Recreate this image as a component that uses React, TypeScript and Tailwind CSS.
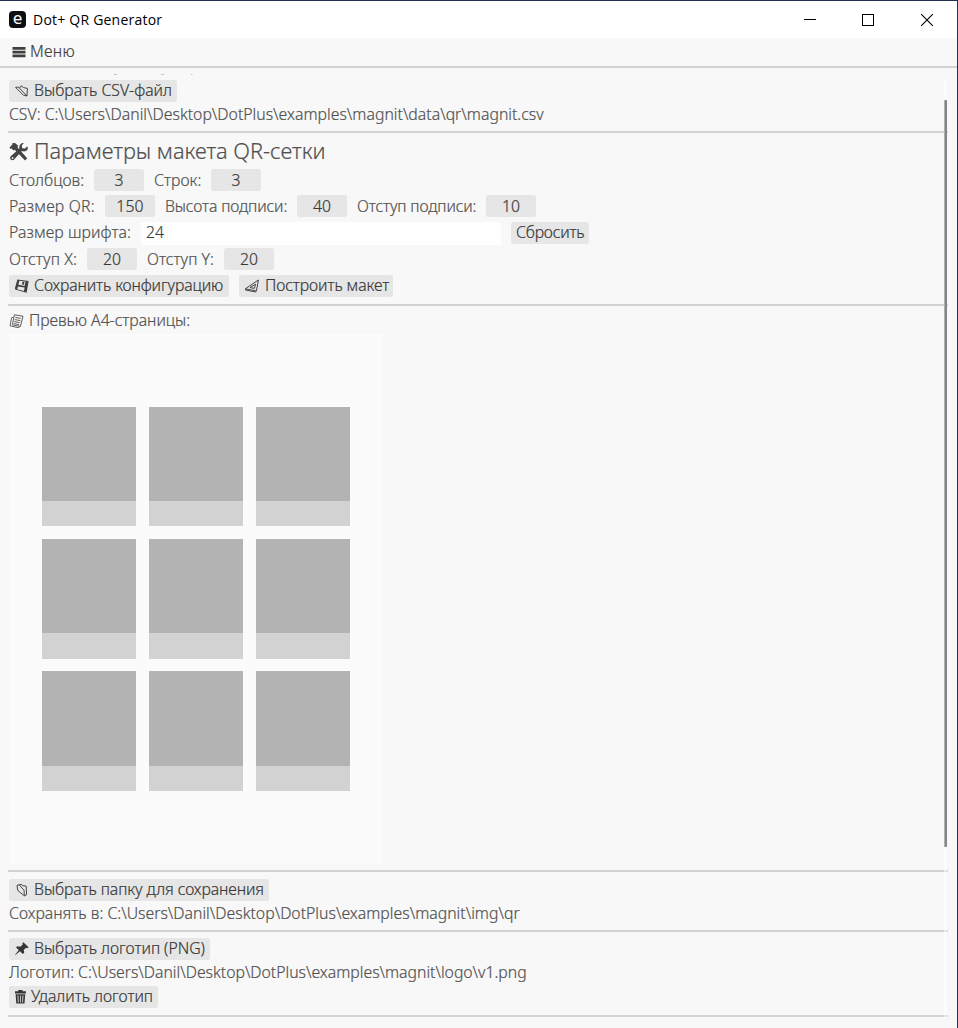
import type { ReactNode } from "react";

const UI = "font-['Noto_Sans','Open_Sans',sans-serif]";

function Separator() {
  return <div className="h-[2px] w-[940px] shrink-0 bg-[#d3d3d3]" />;
}

function Button({ icon, className, children }: { icon?: ReactNode; className: string; children: ReactNode }) {
  return (
    <button className={`flex h-[22px] shrink-0 items-center rounded-[2.5px] bg-[#e6e6e6] pl-[5px] leading-[22px] text-[#383838] ${className}`}>
      {icon}
      <span className="-mt-[2px]">{children}</span>
    </button>
  );
}

function Field({ label, value, className }: { label: string; value: string; className: string }) {
  return (
    <div className="flex h-[22px] items-center">
      <label className={`shrink-0 ${className}`}>{label}</label>
      <div className="mr-[10px] h-[22px] w-[50px] rounded-[2.5px] bg-[#e6e6e6] text-center leading-[22px] tracking-[0.1px] text-[#383838]">{value}</div>
    </div>
  );
}

function OpenFolderIcon() {
  return (
    <svg className="mr-[4px] h-[16px] w-[16px] shrink-0" viewBox="0 0 16 16" fill="none" stroke="#454545" strokeWidth="1">
      <path d="M1.6 4.4 4.4 4 13 13 9.4 12.2Z" />
      <path d="M5.6 5 7.2 2.8 9.6 4.6 13.4 5.4 13 13" />
    </svg>
  );
}

function FolderIcon() {
  return (
    <svg className="mr-[4px] h-[16px] w-[16px] shrink-0" viewBox="0 0 16 16" fill="none" stroke="#454545" strokeWidth="1">
      <path d="M3 3.4 5.2 2.8 10 8.2 10.4 13.8 3.8 8.6Z" />
      <path d="M5.2 2.8 7.2 2.4 8.8 3.6 12.2 4.2 12.6 12.8 10.4 13.8" />
    </svg>
  );
}

function FloppyIcon() {
  return (
    <svg className="mr-[4px] h-[16px] w-[16px] shrink-0" viewBox="0 0 16 16" fill="#3e3e3e">
      <path fillRule="evenodd" d="M3.4 1.6 14.6 3 12.6 14.8 1.2 11.6 1 10ZM5.3 2.8 4.4 6.8 10.6 7.9 11.6 3.6ZM3.9 8.4 3.2 11.2 9.9 13.1 10.7 9.6Z" />
      <path d="M8.6 3.4 10.5 3.7 9.9 6.8 8 6.4Z" />
    </svg>
  );
}

function SetSquareIcon() {
  return (
    <svg className="mr-[5px] h-[16px] w-[16px] shrink-0" viewBox="0 0 16 16" fill="none" stroke="#454545" strokeWidth="1">
      <path d="M14.4 2 12.4 13 1.4 10.8Z" />
      <path d="M11.6 6.2 10.4 10.4 6 9.6Z" />
      <path d="M1.6 10.8v1.3l10.6 1.9" />
    </svg>
  );
}

function PagesIcon() {
  return (
    <svg className="mr-[4px] h-[16px] w-[16px] shrink-0" viewBox="0 0 16 16" fill="none" stroke="#606060" strokeWidth="1">
      <path d="M5.4 1.8 14 3.2 11.4 13.4 3.4 11.8Z" />
      <path d="M4.4 4.2 2.6 4.8 1 12.8 9 14.6 11.4 13.4" />
      <path d="M6.4 4.4 11.8 5.4M5.8 6.6 11.4 7.6M5.2 8.6 10.8 9.6M4.8 10.6 10.2 11.6" />
    </svg>
  );
}

function PinIcon() {
  return (
    <svg className="mr-[4px] h-[16px] w-[16px] shrink-0" viewBox="0 0 16 16" fill="#353535">
      <path d="M9.4 1.2 14.6 6.2 13.4 7.2 12 6.8 9.8 9 10.2 11.8 8.9 13 5.9 10.2 1.4 14 1.1 13.7 4.8 9.1 2 6.6 3.3 5.3 6.2 5.8 8.8 3.6 8.4 2.3Z" />
    </svg>
  );
}

function TrashIcon() {
  return (
    <svg className="mr-[4px] h-[16px] w-[13px] shrink-0" viewBox="0 0 13 16" fill="#353535">
      <path d="M4.3 1h4.2v1.3h3.4v2.2H1V2.300h3.3z" />
      <path fillRule="evenodd" d="M1.6 5.2h9.6l-.7 9.4H2.300zM3.500 6.400l.4 7h.8l-.3-7zM6 6.400v7h.8v-7zM8.500 6.400l-.3 7h.8l.4-7z" />
    </svg>
  );
}

function ToolsIcon() {
  return (
    <svg className="mr-[5px] h-[20px] w-[20px] shrink-0" viewBox="0 0 20 20" fill="#454545">
      <path d="M3.2 1.2 6 1 9 3.6 8.6 5.6 18.2 16.2 16 18.6 6 8 4 8.2 2.9 6.6 1.7 7 .5 5.5 3.4 2.4Z" />
      <path d="M14.8 1 12.8 3.6 13.2 6.2 16 6.6 18.4 4.2C19.6 7 17.8 9.4 15 9.4L12.8 9 5.6 17C4 19.4.4 17.8 1.2 15 1.4 14.4 2 14 2.6 13.4L10.4 6.6C9.8 3.4 11.6.8 14.8 1Z" />
      <circle cx="3.6" cy="16" r=".9" fill="#f8f8f8" />
    </svg>
  );
}

function QrCell() {
  return (
    <div>
      <div className="h-[94.3px] bg-[#b3b3b3]" />
      <div className="h-[25.2px] bg-[#d2d2d2]" />
    </div>
  );
}

export default function App() {
  return (
    <div className={`relative flex h-[1028px] w-[958px] flex-col overflow-hidden border-t border-r border-[#1f3150] bg-[#f8f8f8] text-[15.77px] leading-[22px] font-light whitespace-nowrap text-[#505050] [-webkit-text-stroke:0.2px_currentColor] ${UI}`}>
      <header className="flex h-[37px] shrink-0 items-center bg-white pl-[9px] font-['Open_Sans','Noto_Sans',sans-serif] text-[14px] font-normal text-black [-webkit-text-stroke:0]">
        <div className="flex h-[17px] w-[17px] items-center justify-center rounded-[4px] bg-[#0b0f14] font-['Noto_Sans',sans-serif] text-[17px] leading-none text-white"><span className="-mt-[4px]">e</span></div>
        <span className="ml-[7px] tracking-[0.22px]">Dot+ QR Generator</span>
        <svg className="ml-auto mr-[23px] h-[14px] w-[130px]" viewBox="0 0 130 14" fill="none" stroke="#000">
          <path d="M0 6.5h12M58.5 1.5h11v11h-11z" shapeRendering="crispEdges" />
          <path d="M117.2 1.2l11.6 11.6M128.8 1.2L117.2 12.8" strokeWidth="1.1" />
        </svg>
      </header>
      <nav className="flex h-[30px] shrink-0 items-center border-b-2 border-[#d3d3d3] pl-[12px] text-[#404040]">
        <svg className="mr-[4px] h-[11px] w-[14px]" viewBox="0 0 14 11" fill="#404040">
          <path d="M.5 0h13v2.7H.5zM.5 3.8h13v2.7H.5zM.5 7.6h13v2.7H.5z" />
        </svg>
        <span className="-mt-[2px] tracking-[0.3px]">Меню</span>
      </nav>

      <main className="flex flex-col items-start pl-[8px]">
        <svg className="h-[12px] w-[200px] shrink-0" viewBox="0 0 200 12" fill="#b4b4b4">
          <path d="M106 6h3v.8h-3zM153 6h3v.8h-3zM183 6h1.5v.8H183z" />
        </svg>
        <section className="ml-px flex flex-col items-start">
          <Button icon={<OpenFolderIcon />} className="w-[168px] tracking-[0.02px]">Выбрать CSV-файл</Button>
          <div className="mt-[1px] mb-px h-[22px] tracking-[0.02px]">CSV: C:\Users\Danil\Desktop\DotPlus\examples\magnit\data\qr\magnit.csv</div>
        </section>
        <div className="h-[5px]" />
        <Separator />

        <section className="ml-px flex flex-col items-start">
          <h1 className="mt-[5px] flex h-[28px] items-center text-[21.75px] leading-[28px]">
            <ToolsIcon />
            <span className="-mt-[2px]">Параметры макета QR-сетки</span>
          </h1>
          <div className="mt-[3px] flex">
            <Field label="Столбцов:" value="3" className="w-[85px] tracking-[0.02px]" />
            <Field label="Строк:" value="3" className="w-[57px] tracking-[0.02px]" />
          </div>
          <div className="mt-[4px] flex">
            <Field label="Размер QR:" value="150" className="w-[96px] tracking-[0.22px]" />
            <Field label="Высота подписи:" value="40" className="w-[132px] tracking-[-0.14px]" />
            <Field label="Отступ подписи:" value="10" className="w-[129px] tracking-[-0.14px]" />
          </div>
          <div className="mt-[5px] flex h-[22px] items-center">
            <label className="-mt-[2px] w-[132px] tracking-[0.1px]">Размер шрифта:</label>
            <div className="h-[23px] w-[360px] rounded-[2.5px] bg-white pl-[5px] leading-[21px] tracking-[0.1px] text-[#404040]">24</div>
            <Button className="ml-[10px] w-[78px] tracking-[-0.2px]">Сбросить</Button>
          </div>
          <div className="mt-[4px] flex">
            <Field label="Отступ X:" value="20" className="w-[78px] tracking-[0.12px]" />
            <Field label="Отступ Y:" value="20" className="w-[77px] tracking-[0.02px]" />
          </div>
          <div className="mt-[5px] flex gap-[10px]">
            <Button icon={<FloppyIcon />} className="w-[220px] tracking-[-0.12px]">Сохранить конфигурацию</Button>
            <Button icon={<SetSquareIcon />} className="w-[154px] tracking-[-0.08px]">Построить макет</Button>
          </div>
        </section>
        <div className="h-[7px]" />
        <Separator />

        <section className="ml-px flex flex-col items-start">
          <div className="mt-[4px] flex h-[22px] items-center"><PagesIcon /><span className="-mt-[2px] tracking-[-0.03px]">Превью А4-страницы:</span></div>
          <div className="mt-[2px] grid h-[530px] w-[374px] grid-cols-[repeat(3,94px)] content-start gap-x-[13px] gap-y-[12.7px] bg-[#fbfbfb] pt-[72.9px] pl-[33px]">
            {Array.from({ length: 9 }, (_, i) => <QrCell key={i} />)}
          </div>
        </section>
        <div className="h-[6px]" />
        <Separator />

        <section className="mt-[7px] ml-px flex flex-col items-start">
          <Button icon={<FolderIcon />} className="w-[260px] tracking-[-0.07px]">Выбрать папку для сохранения</Button>
          <div className="mt-[1px] mb-px h-[22px] tracking-[0.02px]">Сохранять в: C:\Users\Danil\Desktop\DotPlus\examples\magnit\img\qr</div>
        </section>
        <div className="h-[5px]" />
        <Separator />

        <section className="mt-[6px] ml-px flex flex-col items-start">
          <Button icon={<PinIcon />} className="w-[201px] tracking-[-0.03px]">Выбрать логотип (PNG)</Button>
          <div className="mt-[1px] mb-px h-[22px]">Логотип: C:\Users\Danil\Desktop\DotPlus\examples\magnit\logo\v1.png</div>
          <Button icon={<TrashIcon />} className="mt-[2px] w-[149px] tracking-[-0.03px]">Удалить логотип</Button>
        </section>
        <div className="h-[7px]" />
        <Separator />
      </main>

      <div className="absolute top-[78px] right-[10px] h-[938px] w-[3px] bg-white/50 pt-[21px]">
        <div className="h-[747px] w-[3px] rounded-[1px] border-l border-[#b0b0b0] bg-[#858585]" />
      </div>
    </div>
  );
}
